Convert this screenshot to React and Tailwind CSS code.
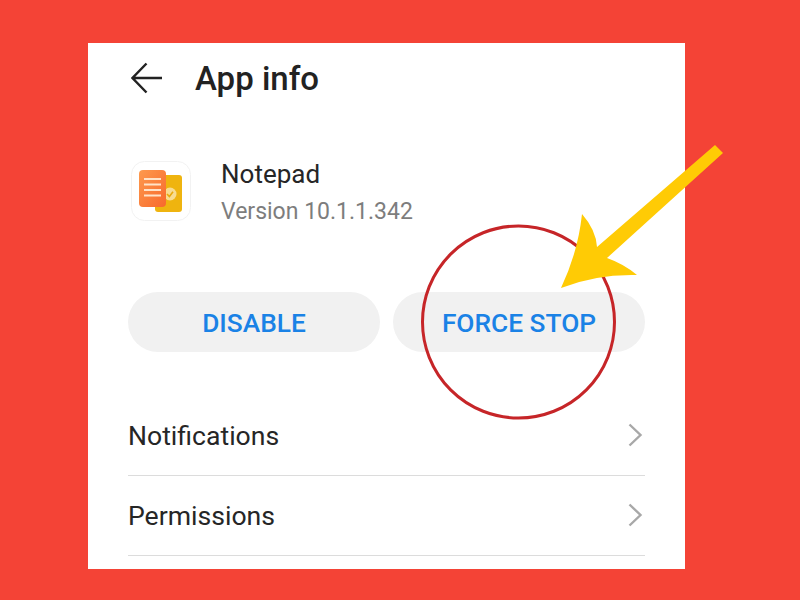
import React from "react";

function Chevron() {
  return (
    <svg width="16" height="24" viewBox="0 0 16 24" fill="none" className="mb-[2px] shrink-0">
      <path d="M2.5 1.5 L13.5 12 L2.5 22.5" stroke="#a8a8a8" strokeWidth="2.4" />
    </svg>
  );
}

function Row({ label }) {
  return (
    <div className="flex h-[80px] items-center justify-between border-b border-[#dcdcdc] pr-[2px] pt-[1px]">
      <span className="text-[26.6px] leading-none text-[#262626]">{label}</span>
      <Chevron />
    </div>
  );
}

function Pill({ label }) {
  return (
    <div className="flex h-[60px] flex-1 items-center justify-center rounded-full bg-[#f1f1f1] pt-[4px] text-[26.3px] font-medium text-[#1a82e6]">
      {label}
    </div>
  );
}

export default function App() {
  return (
    <div className="relative flex h-[600px] w-[800px] justify-start overflow-hidden bg-[#f44336] pl-[88px] pt-[43px] font-['Roboto',sans-serif]">
      <div className="flex h-[526px] w-[597px] flex-col overflow-hidden bg-white pl-[40px] pr-[40px]">
        <div className="flex h-[70px] items-center gap-[32px] pl-[3px]">
          <svg width="32" height="32" viewBox="0 0 32 32" fill="none" className="shrink-0">
            <path d="M31 16 H2 M15.5 1.5 L1.5 16 L15.5 30.5" stroke="#222" strokeWidth="2.4" />
          </svg>
          <h1 className="text-[33px] font-medium leading-none text-[#222]">App info</h1>
        </div>
        <div className="mt-[42px] flex items-center gap-[30px] pl-[3px]">
          <svg width="60" height="60" viewBox="0 0 60 60" className="shrink-0">
            <defs>
              <linearGradient id="doc" x1="0" y1="0" x2="1" y2="1">
                <stop offset="0" stopColor="#fd9a4e" />
                <stop offset="1" stopColor="#f8692c" />
              </linearGradient>
            </defs>
            <rect x="0.5" y="0.5" width="59" height="59" rx="13" fill="#fff" stroke="#f2f2f2" />
            <rect x="24" y="14" width="27" height="37" rx="3" fill="#efb40f" />
            <circle cx="39" cy="33" r="6.5" fill="#f8dc90" />
            <path d="M36 33 L38.4 35.5 L42 30.8" stroke="#e9a90c" strokeWidth="1.6" fill="none" />
            <rect x="8" y="9" width="27" height="37" rx="4" fill="url(#doc)" />
            <path d="M13 18 H30 M13 23.5 H30 M13 29 H30 M13 34.5 H30" stroke="#ffe3c8" strokeWidth="1.8" />
          </svg>
          <div className="flex flex-col pt-[4px]">
            <span className="text-[26px] leading-[30px] text-[#262626]">Notepad</span>
            <span className="mt-[8px] text-[23px] leading-[30px] text-[#7d7d7d]">Version 10.1.1.342</span>
          </div>
        </div>
        <div className="mt-[65px] flex gap-[13px]">
          <Pill label="DISABLE" />
          <Pill label="FORCE STOP" />
        </div>
        <div className="mt-[44px] flex flex-col">
          <Row label="Notifications" />
          <Row label="Permissions" />
        </div>
      </div>
      <svg width="800" height="600" viewBox="0 0 800 600" fill="none" className="absolute left-0 top-0">
        <circle cx="518.5" cy="322" r="96" stroke="#c62528" strokeWidth="3" />
        <path
          d="M715 145 L723 153 L607 258 Q624 264 637 275 Q596 274 561 288 Q578 252 582 214 Q596 230 597 247 Z"
          fill="#ffcb05"
        />
      </svg>
    </div>
  );
}
